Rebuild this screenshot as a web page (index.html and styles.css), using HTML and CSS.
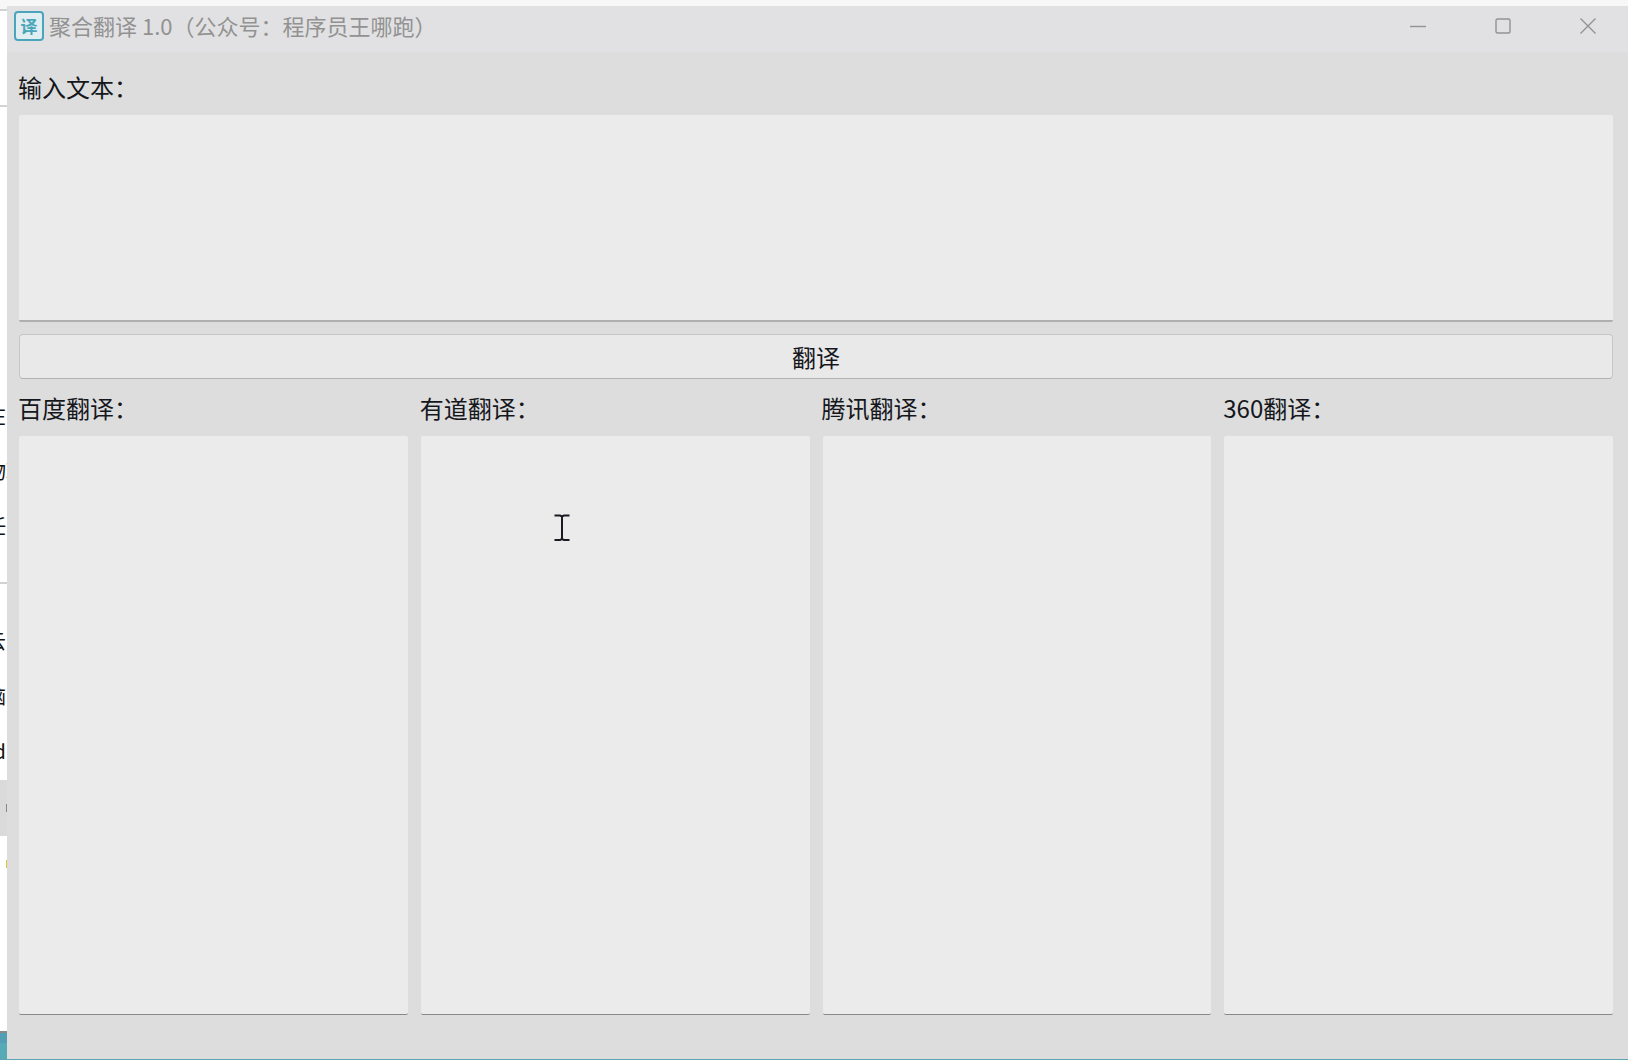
FILE: index.html
```
<!DOCTYPE html>
<html lang="zh-CN">
<head>
    <meta charset="UTF-8">
    <meta name="viewport" content="width=device-width, initial-scale=1.0">
    <title>聚合翻译 1.0</title>
    <link rel="stylesheet" href="styles.css">
</head>
<body>
    <div class="desktop">
        <!-- 窗口后面露出的文档 -->
        <aside class="behind">
            <div class="behind-head"></div>
            <div class="behind-space"></div>
            <p>在</p>
            <p class="cut">物理</p>
            <p>任</p>
            <div class="behind-line"></div>
            <p>云</p>
            <p>脑</p>
            <p>d</p>
            <div class="behind-block"><span class="dot"></span></div>
            <div class="behind-mark"><span class="dot yellow"></span></div>
            <div class="behind-taskbar"></div>
        </aside>

        <main class="window">
            <header class="titlebar">
                <span class="logo">译</span>
                <h1>聚合翻译 1.0（公众号：程序员王哪跑）</h1>
                <div class="controls">
                    <button type="button" aria-label="最小化">
                        <svg width="16" height="16" viewBox="0 0 16 16"><path d="M0 8.5H16"/></svg>
                    </button>
                    <button type="button" aria-label="最大化">
                        <svg width="16" height="16" viewBox="0 0 16 16"><rect x="1" y="1" width="14" height="14" rx="1.5"/></svg>
                    </button>
                    <button type="button" aria-label="关闭">
                        <svg width="16" height="16" viewBox="0 0 16 16"><path d="M0.5 0.5L15.5 15.5M15.5 0.5L0.5 15.5"/></svg>
                    </button>
                </div>
            </header>

            <form class="content">
                <label for="source">输入文本：</label>
                <textarea id="source" class="source"></textarea>
                <button type="button" class="btn-translate">翻译</button>

                <div class="results">
                    <div class="result">
                        <label for="baidu">百度翻译：</label>
                        <textarea id="baidu"></textarea>
                    </div>
                    <div class="result">
                        <label for="youdao">有道翻译：</label>
                        <textarea id="youdao"></textarea>
                        <!-- 鼠标指针 -->
                        <svg class="pointer" width="16" height="28" viewBox="0 0 16 28"><path d="M0.5 1.5H6L8 2.5L10 1.5H15.5M0.5 26H6L8 25L10 26H15.5M8 2V25.5"/></svg>
                    </div>
                    <div class="result">
                        <label for="tencent">腾讯翻译：</label>
                        <textarea id="tencent"></textarea>
                    </div>
                    <div class="result">
                        <label for="so360">360翻译：</label>
                        <textarea id="so360"></textarea>
                    </div>
                </div>
            </form>
        </main>
    </div>
</body>
</html>
```
FILE: styles.css
```
* {
    box-sizing: border-box;
}
body {
    margin: 0;
    font-family: "Noto Sans CJK SC", sans-serif;
    background: #f7f7f7;
}
.desktop {
    display: flex;
    min-height: 100vh;
    padding-top: 6px;
    border-bottom: 1px solid #5aa5b0;
}

/* 左侧露出的部分 */
.behind {
    display: flex;
    flex-direction: column;
    width: 7px;
    overflow: hidden;
    background: #fff;
}
.behind p {
    display: flex;
    justify-content: flex-end;
    margin: 0;
    padding-right: 1px;
    font-size: 20px;
    line-height: 55px;
    white-space: nowrap;
    color: #111;
}
.behind .cut {
    justify-content: flex-start;
    margin-left: -14px;
}
.behind-head {
    height: 5px;
    background: #f7f7f7;
    border-bottom: 2px solid #d2d2d2;
}
.behind-space {
    height: 377px;
    padding-top: 94px;
}
.behind-space::before {
    content: "";
    display: block;
    height: 2px;
    background: #d2d2d2;
}
.behind-line {
    height: 2px;
    margin: 29px 0;
    background: #d2d2d2;
}
.behind-block,
.behind-mark {
    display: flex;
    align-items: center;
    justify-content: flex-end;
    height: 56px;
}
.behind-block {
    margin-top: 2px;
    background: #dadada;
}
.dot {
    width: 1px;
    height: 8px;
    background: #888;
}
.dot.yellow {
    background: #e0c040;
}
.behind-taskbar {
    height: 28px;
    margin-top: auto;
    border-top: 2px solid #8a8a8a;
    background: linear-gradient(#529fb5 10px, #55aab5 10px);
}

/* 窗口 */
.window {
    display: flex;
    flex: 1;
    flex-direction: column;
    background: #ddd;
}
.titlebar {
    display: flex;
    align-items: center;
    height: 46px;
    padding: 0 0 6px 7px;
    background: #e1e1e3;
    color: #929292;
}
.logo {
    width: 30px;
    height: 30px;
    border: 2px solid #4ba5ba;
    border-radius: 4px;
    background: #e0edf1;
    color: #4ba5ba;
    font-size: 17px;
    font-weight: bold;
    line-height: 26px;
    text-align: center;
}
.titlebar h1 {
    flex: 1;
    margin: 0 0 0 5px;
    padding-bottom: 2px;
    font-size: 22px;
    font-weight: normal;
    line-height: 32px;
}
.controls {
    display: flex;
    gap: 5px;
}
.controls button {
    display: flex;
    align-items: center;
    justify-content: center;
    width: 80px;
    height: 40px;
    padding: 0;
    border: none;
    background: none;
}
.controls svg {
    fill: none;
    stroke: #929292;
    stroke-width: 1.4;
}

.content {
    display: flex;
    flex: 1;
    flex-direction: column;
    padding: 19px 15px 44px 12px;
}
label {
    margin: 0 0 12px -1px;
    font-size: 24px;
    line-height: 32px;
    color: #15171c;
}
textarea {
    display: block;
    width: 100%;
    padding: 8px;
    border: none;
    border-bottom: 1px solid #888;
    border-radius: 2px;
    outline: none;
    resize: none;
    background: #ebebeb;
    font-family: inherit;
    font-size: 24px;
}
.source {
    height: 207px;
    border-bottom: 2px solid #aeb0b0;
}
.btn-translate {
    height: 45px;
    margin: 12px 0 13px;
    padding: 0;
    border: 1px solid #c6c6c6;
    border-bottom-color: #b2b2b2;
    border-radius: 4px;
    background: #e9e9e9;
    font-family: inherit;
    font-size: 24px;
    line-height: 32px;
    color: #15171c;
}
.results {
    display: grid;
    flex: 1;
    grid-template-columns: repeat(4, 1fr);
    gap: 13px;
}
.result {
    position: relative;
    display: flex;
    flex-direction: column;
}
.result textarea {
    flex: 1;
}
.pointer {
    position: absolute;
    top: 122px;
    left: 133px;
    fill: none;
    stroke: #1a1a22;
    stroke-width: 2;
}
```
